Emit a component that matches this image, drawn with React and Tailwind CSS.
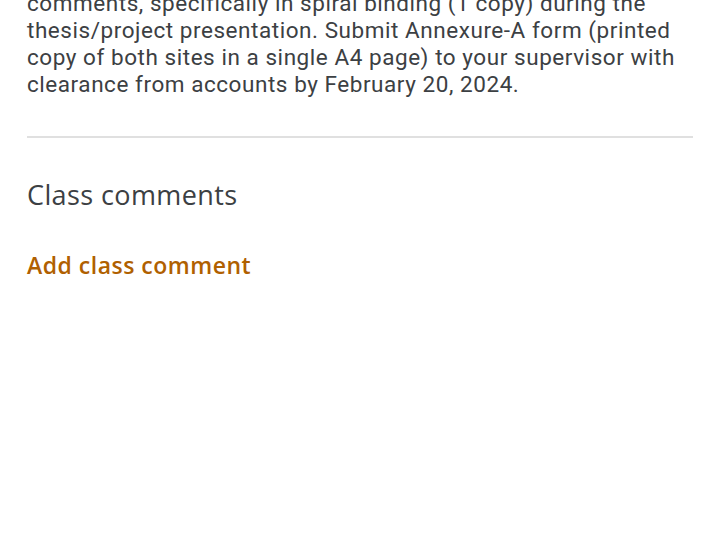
export default function App() {
  return (
    <div className="w-[720px] h-[540px] bg-white overflow-hidden px-[27px]">
      <p className="mt-[-10px] font-['Roboto',sans-serif] text-[22.5px] leading-[27px] tracking-[0.55px] text-[#3c4043]">
        comments, specifically in spiral binding (1 copy) during the thesis/project presentation. Submit Annexure-A form (printed copy of both sites in a single A4 page) to your supervisor with clearance from accounts by February 20, 2024.
      </p>
      <div className="mt-[38px] h-[2px] bg-[#e0e0e0]" />
      <h2 className="mt-[41px] font-['Open_Sans',sans-serif] text-[27px] leading-[32px] tracking-[0.4px] text-[#3c4043]">
        Class comments
      </h2>
      <div className="mt-[40px] font-['Open_Sans',sans-serif] text-[23px] leading-[28px] tracking-[0.5px] font-semibold text-[#b06000]">
        Add class comment
      </div>
    </div>
  );
}
